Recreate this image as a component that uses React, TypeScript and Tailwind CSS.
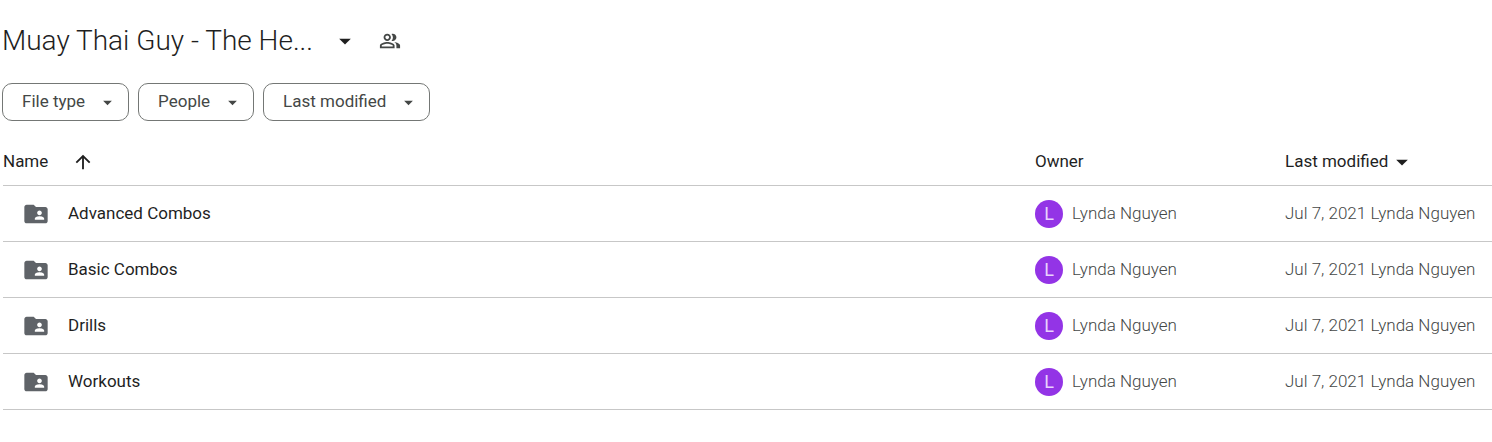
import {
    MdArrowDropDown,
    MdArrowUpward,
    MdFolderShared,
    MdOutlinePeopleAlt,
} from "react-icons/md";

type Folder = {
    name: string;
    owner: string;
    modifiedAt: string;
};

const folders: Folder[] = [
    { name: "Advanced Combos", owner: "Lynda Nguyen", modifiedAt: "Jul 7, 2021" },
    { name: "Basic Combos", owner: "Lynda Nguyen", modifiedAt: "Jul 7, 2021" },
    { name: "Drills", owner: "Lynda Nguyen", modifiedAt: "Jul 7, 2021" },
    { name: "Workouts", owner: "Lynda Nguyen", modifiedAt: "Jul 7, 2021" },
];

export default function App() {
    return (
        <div className="bg-white pl-[2px] pt-[21px] pb-8 font-['Roboto',sans-serif] text-[#1f1f1f]">
            <header className="flex h-10 items-center">
                <h1>
                    <button className="flex items-center gap-[18px] text-[28px] leading-10 font-light whitespace-nowrap">
                        Muay Thai Guy - The He...
                        <MdArrowDropDown className="size-7" />
                    </button>
                </h1>
                <button
                    aria-label="Manage access"
                    className="ml-5 text-[#444746]"
                >
                    <MdOutlinePeopleAlt className="size-[22px]" />
                </button>
            </header>

            <div className="mt-[22px] flex gap-[9px]">
                <FilterChip label="File type" />
                <FilterChip label="People" />
                <FilterChip label="Last modified" />
            </div>

            <div className="pl-px">
                <table className="mt-[18px] w-full table-fixed text-left text-[17px]">
                    <thead>
                        <tr className="h-[46px] border-b border-[#c7c7c7]">
                            <th className="font-normal">
                                <div className="flex items-center gap-6">
                                    Name
                                    <button aria-label="Reverse sort direction">
                                        <MdArrowUpward className="size-[22px]" />
                                    </button>
                                </div>
                            </th>
                            <th className="w-[250px] font-normal">Owner</th>
                            <th className="w-[207px] font-normal">
                                <button className="flex items-center">
                                    Last modified
                                    <MdArrowDropDown className="size-7" />
                                </button>
                            </th>
                        </tr>
                    </thead>
                    <tbody>
                        {folders.map((folder) => (
                            <FolderRow key={folder.name} folder={folder} />
                        ))}
                    </tbody>
                </table>
            </div>
        </div>
    );
}

function FilterChip({ label }: { label: string }) {
    return (
        <button className="flex h-[38px] items-center gap-3 rounded-[10px] border border-[#747775] pr-[10px] pl-[19px] text-[17px] text-[#444746]">
            {label}
            <MdArrowDropDown className="size-[21px]" />
        </button>
    );
}

function FolderRow({ folder }: { folder: Folder }) {
    return (
        <tr className="h-14 border-b border-[#c7c7c7]">
            <td className="pt-[2px]">
                <div className="flex items-center gap-[18px] pl-[19px]">
                    <MdFolderShared className="size-7 text-[#5f6368]" />
                    {folder.name}
                </div>
            </td>
            <td className="pt-[2px] font-light text-[#444746]">
                <div className="flex items-center gap-[9px]">
                    <span className="flex size-7 items-center justify-center rounded-full bg-[#9334e6] text-lg font-normal text-[#e9d2fd]">
                        {folder.owner[0]}
                    </span>
                    {folder.owner}
                </div>
            </td>
            <td className="pt-[2px] font-light whitespace-nowrap text-[#444746]">
                {folder.modifiedAt} {folder.owner}
            </td>
        </tr>
    );
}
